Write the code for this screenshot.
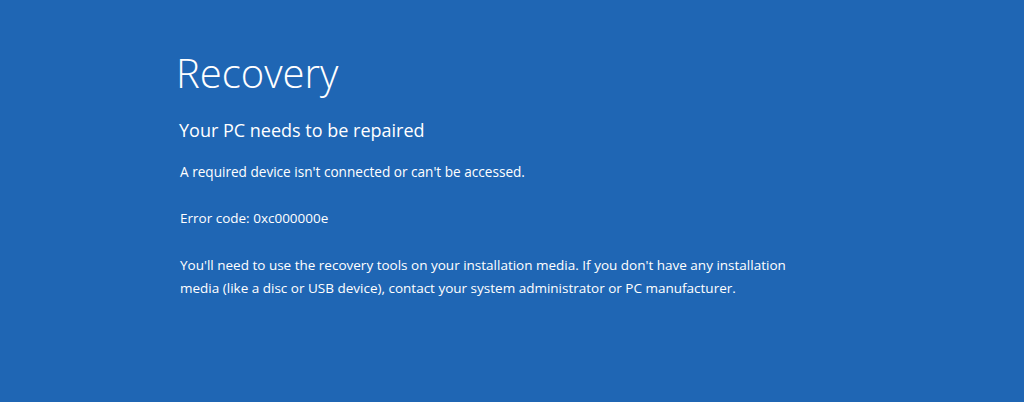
import React from "react";

export default function App() {
  return (
    <div
      className="w-[1024px] h-[402px] bg-[#1f66b4] text-white overflow-hidden"
      style={{ fontFamily: '"Open Sans", "Noto Sans", sans-serif' }}
    >
      <div className="pl-[176px] pt-[47px]">
        <h1 className="text-[40px] leading-[52px] font-light">Recovery</h1>
        <h2 className="mt-[18px] text-[18px] leading-[26px] font-normal pl-[3px]">Your PC needs to be repaired</h2>
        <p className="mt-[18px] text-[13.6px] leading-[22px] pl-[4px]">A required device isn't connected or can't be accessed.</p>
        <p className="mt-[24px] text-[13.5px] leading-[22px] pl-[4px]">Error code: 0xc000000e</p>
        <p className="mt-[25px] text-[13.5px] leading-[23px] pl-[4px] w-[640px]">
          You'll need to use the recovery tools on your installation media. If you don't have any installation media (like a disc or USB device), contact your system administrator or PC manufacturer.
        </p>
      </div>
    </div>
  );
}
